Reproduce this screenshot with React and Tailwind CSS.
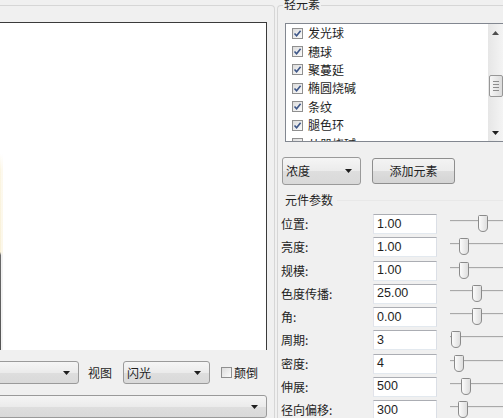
import React from 'react';

const cjk = "font-['Noto_Sans_CJK_SC','Liberation_Sans',sans-serif]";

const items = ['发光球', '穗球', '聚蔓延', '椭圆烧碱', '条纹', '腿色环', '从器烧碱'];

// 元件参数: 标签, 值, 滑块位置
const params = [
  ['位置:', '1.00', 30],
  ['亮度:', '1.00', 11],
  ['规模:', '1.00', 11],
  ['色度传播:', '25.00', 24],
  ['角:', '0.00', 24],
  ['周期:', '3', 3],
  ['密度:', '4', 6],
  ['伸展:', '500', 13],
  ['径向偏移:', '300', 10],
];

const Caret = () => (
  <svg width="7" height="4" viewBox="0 0 7 4" className="shrink-0">
    <path d="M0 0H7L3.5 4Z" fill="#1e1e1e" />
  </svg>
);

const Combo = ({ className, text }) => (
  <div
    className={`flex items-center justify-between border border-[#9a9a9a] rounded-[3px] bg-[linear-gradient(#f5f5f5,#ebebeb_50%,#dedede_51%,#d9d9d9)] pl-[3px] pr-[8px] text-[12px] text-[#1e1e1e] ${cjk} ${className}`}
  >
    <span>{text}</span>
    <Caret />
  </div>
);

const Check = ({ checked }) => (
  <div className="w-[11px] h-[11px] shrink-0 border border-[#8f8f8f] bg-[linear-gradient(135deg,#dcdcdc,#fbfbfb)] flex items-center justify-center">
    {checked && (
      <svg width="9" height="9" viewBox="0 0 9 9">
        <path d="M1.5 4.5L3.6 6.8L7.6 1.8" fill="none" stroke="#3d5688" strokeWidth="1.6" />
      </svg>
    )}
  </div>
);

const Thumb = () => (
  <svg width="10" height="17" viewBox="0 0 10 17">
    <defs>
      <linearGradient id="tg" x1="0" x2="1">
        <stop offset="0" stopColor="#fdfdfd" />
        <stop offset="1" stopColor="#dcdcdc" />
      </linearGradient>
    </defs>
    <path
      d="M0.5 1.5Q0.5 0.5 1.5 0.5H8.5Q9.5 0.5 9.5 1.5V12Q9.5 16.5 5 16.5Q0.5 16.5 0.5 12Z"
      fill="url(#tg)"
      stroke="#8a8a8a"
    />
  </svg>
);

const Slider = ({ pos }) => (
  <div className="relative ml-[11px] w-[60px] h-[20px] shrink-0">
    <div className="mt-[6px] ml-[2px] h-[2px] border-t border-[#a9a9a9] border-b-[#ffffff] bg-[#e6e6e6]" />
    <div className="absolute top-[1px]" style={{ left: pos }}>
      <Thumb />
    </div>
  </div>
);

const ScrollBar = () => (
  <div className="w-[15px] shrink-0 bg-[linear-gradient(90deg,#e6e6e6,#f4f4f4)] flex flex-col items-center">
    <div className="h-[17px] flex items-center justify-center">
      <svg width="7" height="4" viewBox="0 0 7 4">
        <path d="M0 4H7L3.5 0Z" fill="#4d4d4d" />
      </svg>
    </div>
    <div className="mt-[34px] w-[14px] h-[22px] ml-[1px] border border-[#979797] rounded-[2px] bg-[linear-gradient(90deg,#f6f6f6,#dcdcdc)] flex flex-col items-center justify-center gap-[2px]">
      <div className="w-[6px] h-px bg-[#8c8c8c]" />
      <div className="w-[6px] h-px bg-[#8c8c8c]" />
      <div className="w-[6px] h-px bg-[#8c8c8c]" />
      <div className="w-[6px] h-px bg-[#8c8c8c]" />
    </div>
    <div className="mt-auto h-[17px] flex items-center justify-center">
      <Caret />
    </div>
  </div>
);

export default function App() {
  return (
    <div className={`w-[503px] h-[418px] overflow-hidden bg-[#f0f0f0] flex text-[#1e1e1e] ${cjk}`}>
      {/* 左侧: 画布 */}
      <div className="w-[277px] shrink-0">
        <div className="w-[275px] h-[420px] mt-[5px] border-t border-r border-[#d6d6d6] rounded-tr-[4px] pt-[16px]">
          <div className="w-[267px] h-[328px] bg-white border-t border-r border-[#3a3a3a] flex">
            <div className="w-px h-full bg-[linear-gradient(#ffffff_0%,#ffffff_40%,#fbf5e2_45%,#f8f0d8_70%,#6a6a6a_71%,#555555_100%)]" />
            <div className="w-[2px] h-full bg-[linear-gradient(#ffffff_0%,#ffffff_40%,#fdf9ee_45%,#fcf7e9_70%,#f2f2f2_71%,#f4f4f4_100%)]" />
          </div>

          <div className="mt-[11px] flex items-center h-[23px]">
            <Combo className="-ml-[20px] w-[99px] h-[23px]" text="" />
            <span className="ml-[9px] text-[12px]">视图</span>
            <Combo className="ml-[11px] w-[87px] h-[23px]" text="闪光" />
            <div className="ml-[11px]">
              <Check checked={false} />
            </div>
            <span className="ml-[2px] text-[12px]">颠倒</span>
          </div>

          <Combo className="mt-[11px] -ml-[20px] w-[287px] h-[23px]" text="" />
        </div>
      </div>

      {/* 右侧: 元素与参数 */}
      <div className="relative flex-1 min-w-0 mt-[5px] border-t border-l border-[#d6d6d6] rounded-tl-[4px]">
        <div className="absolute -top-[10px] left-[5px] px-[1px] bg-[#f0f0f0] text-[12px] leading-[16px]">
          轻元素
        </div>

        <div className="ml-[7px] mt-[17px] w-[219px] h-[119px] border border-[#828790] bg-white flex overflow-hidden">
          <div className="flex-1 pl-[6px]">
            {items.map((name, i) => (
              <div key={name} className="h-[18.4px] flex items-center gap-[5px] text-[12px]">
                <Check checked={i < 6} />
                <span>{name}</span>
              </div>
            ))}
          </div>
          <ScrollBar />
        </div>

        <div className="mt-[15px] flex items-start">
          <Combo className="ml-[4px] w-[79px] h-[28px]" text="浓度" />
          <button className="ml-[11px] mt-[1px] w-[83px] h-[26px] border border-[#8e8e8e] rounded-[3px] bg-[linear-gradient(#f3f3f3,#ececec_50%,#dddddd_51%,#d4d4d4)] text-[12px]">
            添加元素
          </button>
        </div>

        <div className="mt-[7px] h-[16px] flex items-center">
          <span className="ml-[7px] text-[12px] leading-[16px]">元件参数</span>
          <div className="ml-[4px] flex-1 h-px bg-[#e8e8e8]" />
        </div>

        <div className="mt-[6px] flex flex-col gap-[3.25px]">
          {params.map(([label, value, pos]) => (
            <div key={label} className="h-[20px] flex items-center">
              <span className="ml-[3px] w-[92px] shrink-0 text-[12px]">{label}</span>
              <div className="w-[64px] h-[20px] shrink-0 bg-white border border-[#abadb3] border-l-[#e2e3ea] border-b-[#e3e9ef] border-r-[#dbdfe6] pl-[3px] flex items-center text-[12.5px] font-['Liberation_Sans',sans-serif]">
                {value}
              </div>
              <Slider pos={pos} />
            </div>
          ))}
        </div>
      </div>
    </div>
  );
}
